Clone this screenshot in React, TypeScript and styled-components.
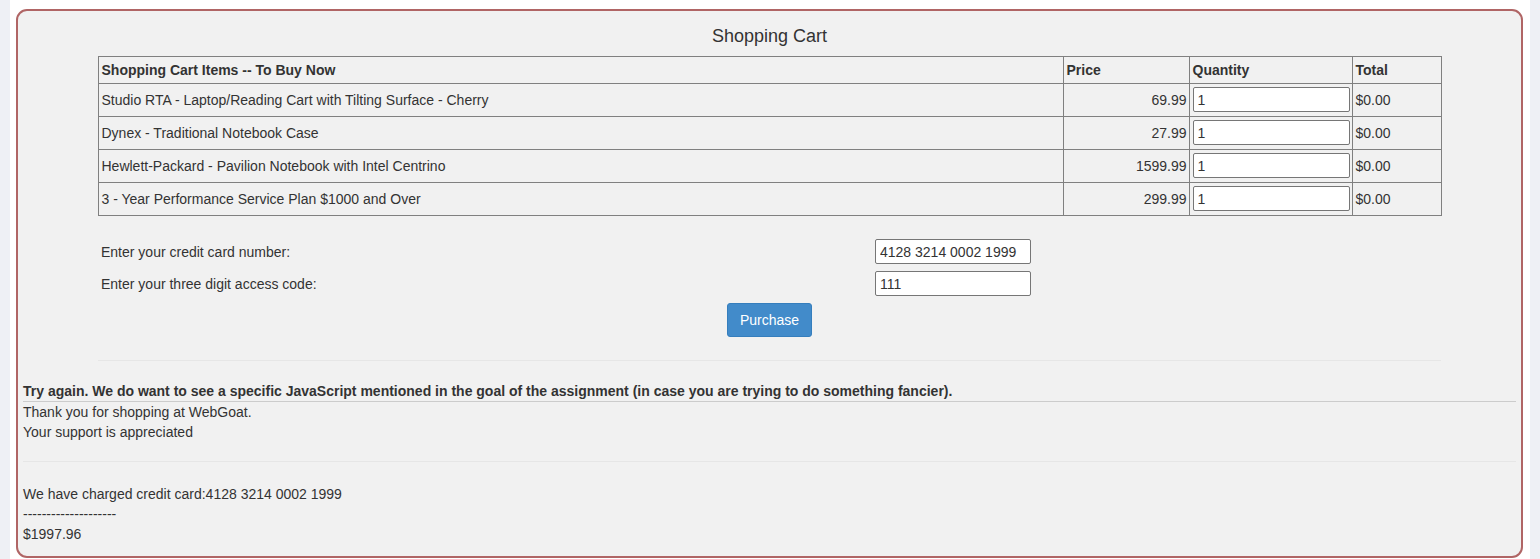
import React from 'react';
import styled, { createGlobalStyle } from 'styled-components';

const GlobalStyle = createGlobalStyle`
  html, body {
    margin: 0;
    padding: 0;
    background: #eef0f5;
  }
  body {
    font-family: "Liberation Sans", Arial, Helvetica, sans-serif;
    font-size: 14px;
    color: #333;
  }
`;

const Page = styled.div`
  display: flex;
  min-height: 559px;
`;

const SideStrip = styled.div`
  width: 10px;
  flex: none;
  background: #eef0f5;
`;

const Main = styled.main`
  flex: 1;
  background: #fff;
  padding: 9px 7px 0 6px;
`;

const Panel = styled.section`
  background: #f1f1f1;
  border: 2px solid #b06565;
  border-radius: 11px;
  height: 549px;
  box-sizing: border-box;
  display: flex;
  flex-direction: column;
`;

const Title = styled.h2`
  margin: 15px 0 10px;
  font-size: 18px;
  font-weight: normal;
  line-height: 20px;
  text-align: center;
  color: #333;
`;

const CartTable = styled.table`
  width: 1343px;
  margin: 0 auto;
  border-collapse: collapse;
  table-layout: fixed;
  line-height: 18px;
`;

const Col = styled.col<{ $w: number }>`
  width: ${(p) => p.$w}px;
`;

const HeadCell = styled.th`
  border: 1px solid #808080;
  padding: 4px 3px;
  text-align: left;
  font-weight: bold;
`;

const Cell = styled.td<{ $right?: boolean }>`
  border: 1px solid #808080;
  padding: 3px 2px 4px 3px;
  text-align: ${(p) => (p.$right ? 'right' : 'left')};
  height: 25px;
`;

const QtyInput = styled.input`
  box-sizing: border-box;
  width: 157px;
  height: 25px;
  border: 1px solid #767676;
  border-radius: 2px;
  padding: 0 4px;
  font: 14px "Liberation Sans", Arial, sans-serif;
  color: #333;
  background: #fff;
  display: block;
`;

const PayForm = styled.div`
  width: 1343px;
  margin: 23px auto 0;
  display: grid;
  grid-template-columns: 777px 156px;
  row-gap: 7px;
  align-items: center;
`;

const PayLabel = styled.label`
  padding-left: 3px;
`;

const PayInput = styled.input`
  box-sizing: border-box;
  width: 156px;
  height: 25px;
  border: 1px solid #767676;
  border-radius: 2px;
  padding: 0 4px;
  font: 14px "Liberation Sans", Arial, sans-serif;
  color: #333;
  background: #fff;
`;

const ButtonRow = styled.div`
  display: flex;
  justify-content: center;
  margin-top: 7px;
`;

const PurchaseButton = styled.button`
  width: 85px;
  height: 34px;
  background: #428bca;
  border: 1px solid #357ebd;
  border-radius: 3px;
  color: #fff;
  font: 14px "Liberation Sans", Arial, sans-serif;
  cursor: pointer;
`;

const FaintRule = styled.hr<{ $wide?: boolean }>`
  border: 0;
  border-top: 1px solid #e6e6e6;
  margin: ${(p) => (p.$wide ? '19px 5px 22px' : '23px auto 0')};
  width: ${(p) => (p.$wide ? 'auto' : '1343px')};
`;

const Feedback = styled.div`
  margin: 20px 5px 0;
  line-height: 20px;
`;

const Warning = styled.div`
  font-weight: bold;
  border-bottom: 1px solid #cccccc;
`;

const Line = styled.div`
  line-height: 20px;
`;

const Output = styled.div`
  margin: 0 5px;
`;

const items = [
  { name: 'Studio RTA - Laptop/Reading Cart with Tilting Surface - Cherry', price: '69.99' },
  { name: 'Dynex - Traditional Notebook Case', price: '27.99' },
  { name: 'Hewlett-Packard - Pavilion Notebook with Intel Centrino', price: '1599.99' },
  { name: '3 - Year Performance Service Plan $1000 and Over', price: '299.99' },
];

const App: React.FC = () => {
  return (
    <>
      <GlobalStyle />
      <Page>
        <SideStrip />
        <Main>
          <Panel>
            <Title>Shopping Cart</Title>
            <CartTable>
              <colgroup>
                <Col $w={965} />
                <Col $w={126} />
                <Col $w={163} />
                <Col $w={89} />
              </colgroup>
              <thead>
                <tr>
                  <HeadCell>Shopping Cart Items -- To Buy Now</HeadCell>
                  <HeadCell>Price</HeadCell>
                  <HeadCell>Quantity</HeadCell>
                  <HeadCell>Total</HeadCell>
                </tr>
              </thead>
              <tbody>
                {items.map((item) => (
                  <tr key={item.name}>
                    <Cell>{item.name}</Cell>
                    <Cell $right>{item.price}</Cell>
                    <Cell>
                      <QtyInput defaultValue="1" />
                    </Cell>
                    <Cell>$0.00</Cell>
                  </tr>
                ))}
              </tbody>
            </CartTable>

            <PayForm>
              <PayLabel>Enter your credit card number:</PayLabel>
              <PayInput defaultValue="4128 3214 0002 1999" />
              <PayLabel>Enter your three digit access code:</PayLabel>
              <PayInput defaultValue="111" />
            </PayForm>
            <ButtonRow>
              <PurchaseButton>Purchase</PurchaseButton>
            </ButtonRow>

            <FaintRule />

            <Feedback>
              <Warning>
                Try again. We do want to see a specific JavaScript mentioned in the goal of the
                assignment (in case you are trying to do something fancier).
              </Warning>
              <Line>Thank you for shopping at WebGoat.</Line>
              <Line>Your support is appreciated</Line>
            </Feedback>

            <FaintRule $wide />

            <Output>
              <Line>We have charged credit card:4128 3214 0002 1999</Line>
              <Line>--------------------</Line>
              <Line>$1997.96</Line>
            </Output>
          </Panel>
        </Main>
        <SideStrip />
      </Page>
    </>
  );
};

export default App;
